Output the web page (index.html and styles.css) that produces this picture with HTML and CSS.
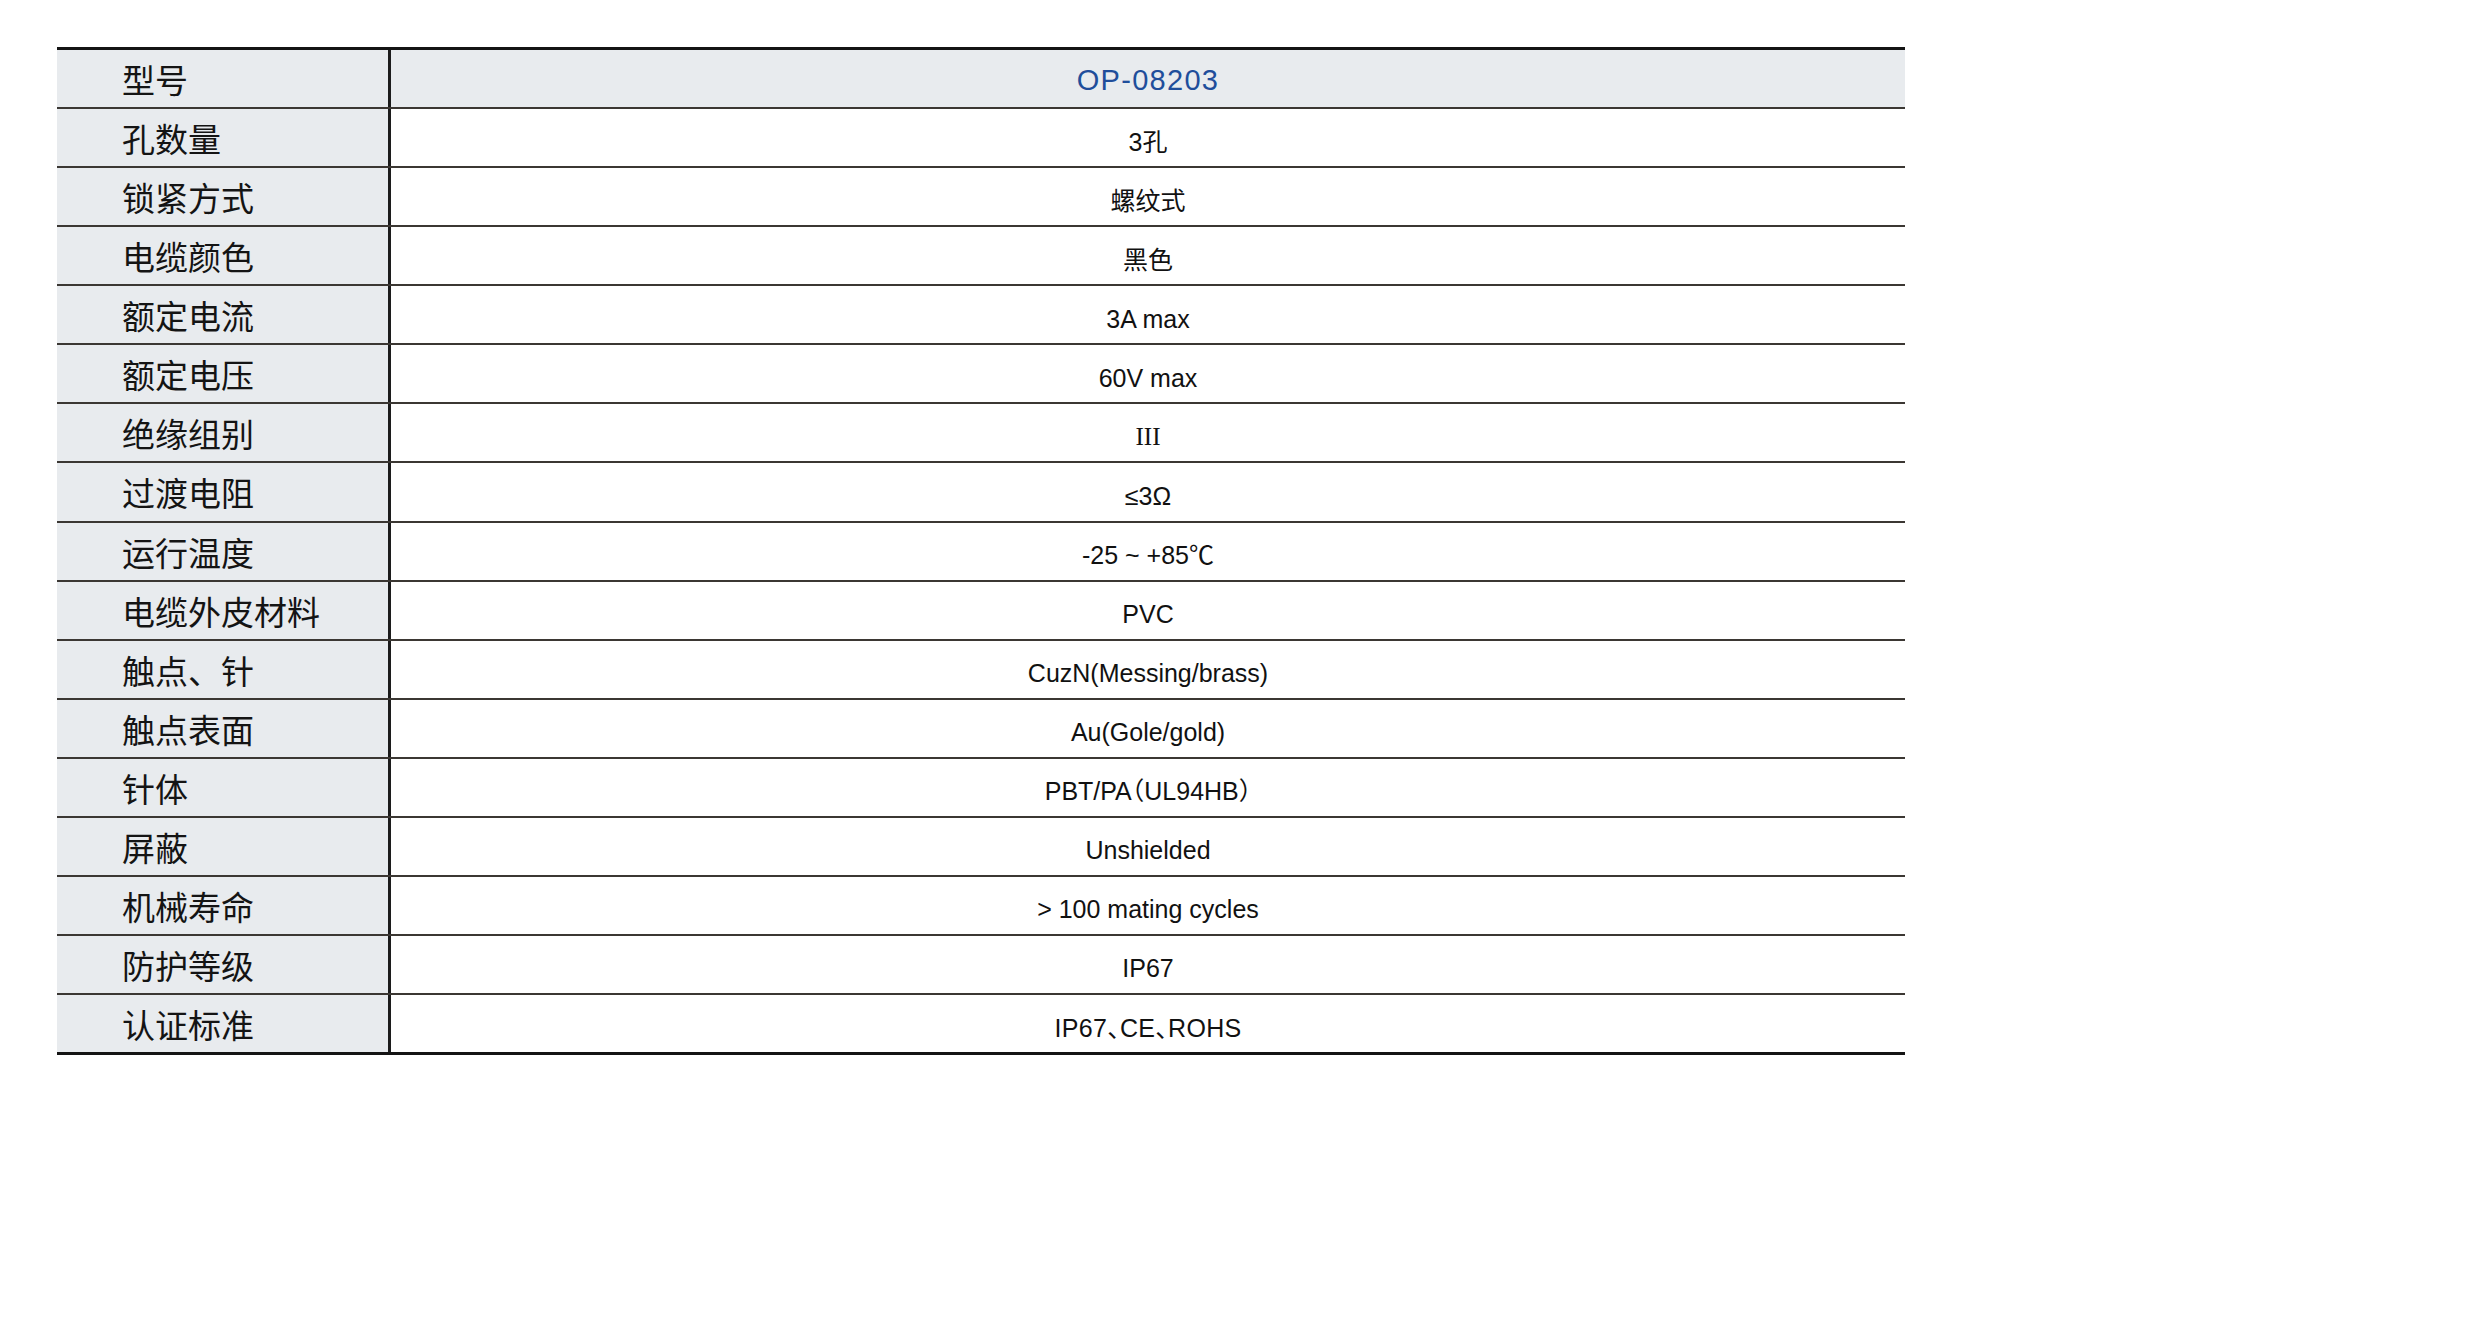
FILE: index.html
```html
<!DOCTYPE html>
<html lang="zh-CN">
<head>
<meta charset="utf-8">
<title>OP-08203</title>
<link rel="stylesheet" href="styles.css">
</head>
<body>
<div class="spec">
  <div class="row head"><div class="k">型号</div><div class="v model">OP-08203</div></div>
  <div class="row"><div class="k">孔数量</div><div class="v">3孔</div></div>
  <div class="row"><div class="k">锁紧方式</div><div class="v">螺纹式</div></div>
  <div class="row"><div class="k">电缆颜色</div><div class="v">黑色</div></div>
  <div class="row"><div class="k">额定电流</div><div class="v">3A max</div></div>
  <div class="row"><div class="k">额定电压</div><div class="v">60V max</div></div>
  <div class="row"><div class="k">绝缘组别</div><div class="v serif">III</div></div>
  <div class="row"><div class="k">过渡电阻</div><div class="v">≤3Ω</div></div>
  <div class="row"><div class="k">运行温度</div><div class="v">-25 ~ +85℃</div></div>
  <div class="row"><div class="k">电缆外皮材料</div><div class="v">PVC</div></div>
  <div class="row"><div class="k">触点、针</div><div class="v">CuzN(Messing/brass)</div></div>
  <div class="row"><div class="k">触点表面</div><div class="v">Au(Gole/gold)</div></div>
  <div class="row"><div class="k">针体</div><div class="v">PBT/PA（UL94HB）</div></div>
  <div class="row"><div class="k">屏蔽</div><div class="v">Unshielded</div></div>
  <div class="row"><div class="k">机械寿命</div><div class="v">&gt; 100 mating cycles</div></div>
  <div class="row"><div class="k">防护等级</div><div class="v">IP67</div></div>
  <div class="row"><div class="k">认证标准</div><div class="v cert">IP67、CE、ROHS</div></div>
</div>
</body>
</html>
```
FILE: styles.css
```css
html, body {
  margin: 0;
  background: #ffffff;
}
body {
  padding: 47px 0 0 57px;
  font-family: "Liberation Sans", Arial, "Noto Sans CJK SC", sans-serif;
  color: #111111;
}
.spec {
  width: 1848px;
  height: 1008px;
  box-sizing: border-box;
  display: flex;
  flex-direction: column;
  border-top: 3px solid #141414;
  border-bottom: 3px solid #141414;
}
.row {
  flex: 1 1 0;
  display: grid;
  grid-template-columns: 334px 1fr;
  border-bottom: 2px solid #3b3733;
}
.row:last-child {
  border-bottom: none;
}
.k {
  background: #e8ebee;
  border-right: 3px solid #1c1c1c;
  padding: 1px 0 0 65px;
  box-sizing: border-box;
  display: flex;
  align-items: center;
  font-family: "Noto Sans CJK SC", sans-serif;
  font-size: 33px;
  color: #141414;
}
.v {
  display: flex;
  align-items: center;
  justify-content: center;
  font-size: 25px;
  line-height: 30px;
  padding-top: 8px;
  box-sizing: border-box;
  font-feature-settings: "halt";
}
.head .v {
  background: #e8ebee;
  padding-top: 2px;
}
.model {
  color: #1f4e9b;
  font-size: 29px;
  letter-spacing: 1.3px;
}
.cert {
  letter-spacing: 0.3px;
}
.serif {
  font-family: "Liberation Serif", "Times New Roman", serif;
  font-size: 25px;
}
```
